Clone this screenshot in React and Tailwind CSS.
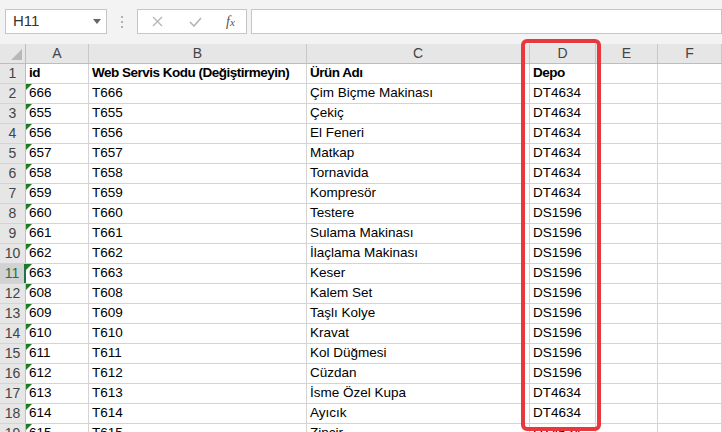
const rows = [
  ["666", "T666", "Çim Biçme Makinası", "DT4634"],
  ["655", "T655", "Çekiç", "DT4634"],
  ["656", "T656", "El Feneri", "DT4634"],
  ["657", "T657", "Matkap", "DT4634"],
  ["658", "T658", "Tornavida", "DT4634"],
  ["659", "T659", "Kompresör", "DT4634"],
  ["660", "T660", "Testere", "DS1596"],
  ["661", "T661", "Sulama Makinası", "DS1596"],
  ["662", "T662", "İlaçlama Makinası", "DS1596"],
  ["663", "T663", "Keser", "DS1596"],
  ["608", "T608", "Kalem Set", "DS1596"],
  ["609", "T609", "Taşlı Kolye", "DS1596"],
  ["610", "T610", "Kravat", "DS1596"],
  ["611", "T611", "Kol Düğmesi", "DS1596"],
  ["612", "T612", "Cüzdan", "DS1596"],
  ["613", "T613", "İsme Özel Kupa", "DT4634"],
  ["614", "T614", "Ayıcık", "DT4634"],
  ["615", "T615", "Zincir", "DT4634"],
];

function Cell({ w, children, bold, flag }) {
  return (
    <div className={`relative h-full shrink-0 border-r border-[#d4d4d4] pl-[3px] flex items-center overflow-hidden whitespace-nowrap ${w} ${bold ? "font-bold text-[13.5px] tracking-[-0.5px]" : "text-[13.5px]"}`}>
      {flag && (
        <div className="absolute left-0 top-0 w-0 h-0 border-t-[6px] border-t-[#1e7b1e] border-r-[6px] border-r-transparent" />
      )}
      {children}
    </div>
  );
}

function Row({ n, cells, bold, flag, active }) {
  return (
    <div className="flex h-[20px] border-b border-[#d4d4d4] bg-white">
      <div className={`w-[26px] shrink-0 h-full flex items-center justify-center text-[14px] border-r ${active ? "bg-[#d2d2d2] text-[#217346] border-r-2 border-r-[#217346]" : "bg-[#e6e6e6] text-[#444] border-r-[#bdbdbd]"}`}>
        {n}
      </div>
      <Cell w="w-[63px]" bold={bold} flag={flag}>{cells[0]}</Cell>
      <Cell w="w-[218px]" bold={bold}>{cells[1]}</Cell>
      <Cell w="w-[223px]" bold={bold}>{cells[2]}</Cell>
      <Cell w="w-[66px]" bold={bold}>{cells[3]}</Cell>
      <Cell w="w-[62px]" />
      <Cell w="w-[64px]" />
    </div>
  );
}

export default function App() {
  return (
    <div className="relative w-[722px] h-[432px] overflow-hidden bg-white text-[14px] text-black" style={{ fontFamily: '"Liberation Sans", Arial, sans-serif' }}>
      {/* formula bar */}
      <div className="h-[44px] bg-[#f3f3f3] flex items-start pt-[9px] pl-[5px]">
        <div className="w-[102px] h-[25px] bg-white border border-[#c6c6c6] flex items-center pl-[7px] pr-[5px] text-[15px] text-[#333]">
          <span className="flex-1">H11</span>
          <svg width="8" height="5" viewBox="0 0 8 5"><path d="M0 0h8L4 5z" fill="#666" /></svg>
        </div>
        <div className="w-[30px] h-[25px] flex flex-col items-center justify-center gap-[3px]">
          <div className="w-[2px] h-[2px] bg-[#b0b0b0]" />
          <div className="w-[2px] h-[2px] bg-[#b0b0b0]" />
          <div className="w-[2px] h-[2px] bg-[#b0b0b0]" />
        </div>
        <div className="w-[110px] h-[25px] bg-white border border-[#c6c6c6] flex items-center">
          <svg className="ml-[14px]" width="11" height="11" viewBox="0 0 11 11"><path d="M1 1l9 9M10 1l-9 9" stroke="#b4b4b4" strokeWidth="1.3" /></svg>
          <svg className="ml-[26px]" width="13" height="10" viewBox="0 0 13 10"><path d="M1 5l4 4 7-8" stroke="#b4b4b4" strokeWidth="1.6" fill="none" /></svg>
          <span className="ml-[24px] text-[14px] italic text-[#555]" style={{ fontFamily: '"Liberation Serif", serif' }}>
            f<span className="text-[11px]">x</span>
          </span>
        </div>
        <div className="ml-[4px] flex-1 h-[25px] bg-white border border-[#c6c6c6]" />
      </div>

      {/* column headers */}
      <div className="flex h-[20px] bg-[#e6e6e6] border-b border-[#bdbdbd] text-[14px] text-[#444]">
        <div className="w-[26px] shrink-0 h-full border-r border-[#bdbdbd] relative">
          <svg className="absolute right-[3px] bottom-[3px]" width="11" height="11" viewBox="0 0 11 11"><path d="M11 0v11H0z" fill="#b8b8b8" /></svg>
        </div>
        {[["A", "w-[63px]"], ["B", "w-[218px]"], ["C", "w-[223px]"], ["D", "w-[66px]"], ["E", "w-[62px]"], ["F", "w-[64px]"]].map(([l, w]) => (
          <div key={l} className={`${w} shrink-0 h-full border-r border-[#c8c8c8] flex items-center justify-center`}>{l}</div>
        ))}
      </div>

      <Row n={1} cells={["id", "Web Servis Kodu (Değiştirmeyin)", "Ürün Adı", "Depo"]} bold />
      {rows.map((r, i) => (
        <Row key={i} n={i + 2} cells={r} flag active={i + 2 === 11} />
      ))}

      {/* highlight around column D */}
      <div className="absolute left-[521px] top-[39px] w-[80px] h-[392px] border-[4px] border-[#e8383d] rounded-[6px]" />
    </div>
  );
}
